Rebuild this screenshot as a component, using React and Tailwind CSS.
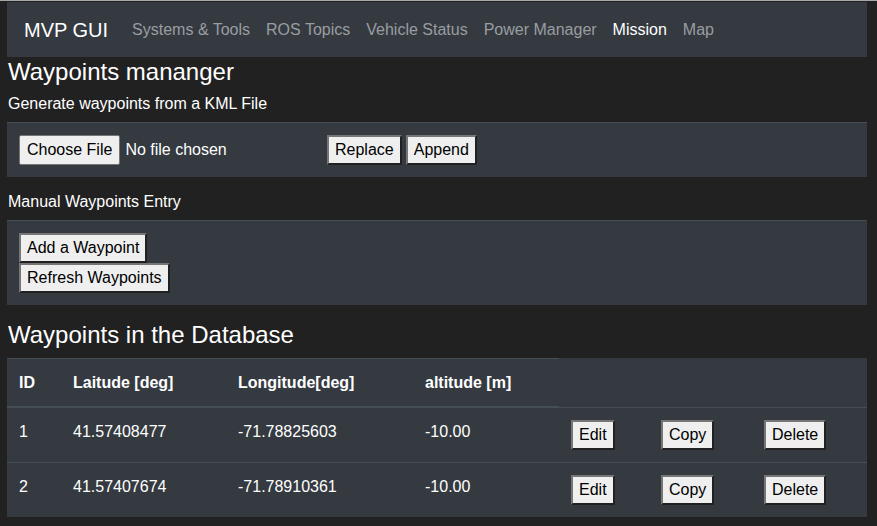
const NAV = ["Systems & Tools", "ROS Topics", "Vehicle Status", "Power Manager", "Mission", "Map"];

const WAYPOINTS = [
  { id: 1, lat: "41.57408477", lon: "-71.78825603", alt: "-10.00" },
  { id: 2, lat: "41.57407674", lon: "-71.78910361", alt: "-10.00" },
];

function Btn({ children }) {
  return (
    <button className="bg-[#efefef] text-black border-2 [border-style:outset] border-[#767676] px-[6px] py-px leading-6">
      {children}
    </button>
  );
}

function Panel({ children }) {
  return <div className="bg-[#343a40] border-t border-[#454d55] p-3">{children}</div>;
}

export default function App() {
  return (
    <div className="min-h-[526px] bg-[#212121] text-white text-base leading-6 font-['Liberation_Sans',Arial,sans-serif]">
      <div className="h-px bg-[#a8a8a8]" />
      <div className="h-px" />
      <div className="w-[860px] ml-[7px]">
        <nav className="bg-[#343a40] h-[55px] flex items-center pl-[17px] pr-4">
          <span className="text-xl mr-4 text-white">MVP GUI</span>
          {NAV.map(n => (
            <span key={n} className={`px-2 ${n === "Mission" ? "text-white" : "text-[#9a9da0]"}`}>{n}</span>
          ))}
        </nav>

        <h3 className="text-2xl leading-[29px] pl-px">Waypoints mananger</h3>
        <p className="mt-[6px] mb-[6px] pl-px">Generate waypoints from a KML File</p>
        <Panel>
          <div className="flex items-center">
            <input
              type="file"
              className="w-[304px] text-white file:mr-[5px] file:px-[7px] file:py-[2px] file:border file:border-[#767676] file:rounded-[2px] file:bg-[#efefef] file:text-black"
            />
            <span className="ml-1 flex gap-1">
              <Btn>Replace</Btn>
              <Btn>Append</Btn>
            </span>
          </div>
        </Panel>

        <p className="mt-[13px] mb-[6px] pl-px">Manual Waypoints Entry</p>
        <Panel>
          <div className="flex flex-col items-start">
            <Btn>Add a Waypoint</Btn>
            <Btn>Refresh Waypoints</Btn>
          </div>
        </Panel>

        <h3 className="text-2xl leading-[29px] mt-[15px] mb-[9px] pl-px">Waypoints in the Database</h3>
        <table className="w-[860px] table-fixed border-collapse bg-[#343a40] text-left">
          <colgroup>
            <col className="w-[54px]" />
            <col className="w-[165px]" />
            <col className="w-[187px]" />
            <col className="w-[146px]" />
            <col className="w-[90px]" />
            <col className="w-[103px]" />
            <col className="w-[115px]" />
          </colgroup>
          <thead>
            <tr>
              {["ID", "Laitude [deg]", "Longitude[deg]", "altitude [m]"].map(h => (
                <th key={h} className="font-bold px-3 pt-3 pb-[11px] border-t border-b-2 border-[#454d55] align-bottom">{h}</th>
              ))}
            </tr>
          </thead>
          <tbody>
            {WAYPOINTS.map(w => (
              <tr key={w.id}>
                <td className="p-3 border-t border-[#454d55] align-top">{w.id}</td>
                <td className="p-3 border-t border-[#454d55] align-top">{w.lat}</td>
                <td className="p-3 border-t border-[#454d55] align-top">{w.lon}</td>
                <td className="p-3 border-t border-[#454d55] align-top">{w.alt}</td>
                <td className="p-3 border-t border-[#454d55] align-top"><Btn>Edit</Btn></td>
                <td className="p-3 border-t border-[#454d55] align-top"><Btn>Copy</Btn></td>
                <td className="p-3 border-t border-[#454d55] align-top"><Btn>Delete</Btn></td>
              </tr>
            ))}
          </tbody>
        </table>
      </div>
    </div>
  );
}
